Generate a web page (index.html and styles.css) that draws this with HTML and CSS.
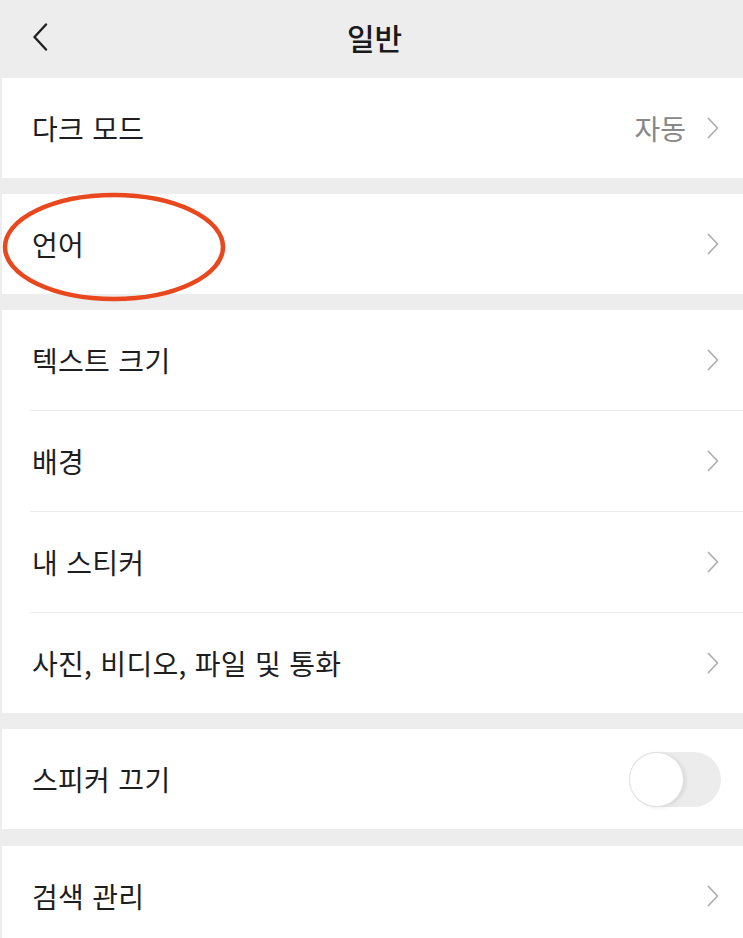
FILE: index.html
```html
<!DOCTYPE html>
<html lang="ko">
<head>
<meta charset="utf-8">
<title>일반</title>
<link rel="stylesheet" href="styles.css">
</head>
<body>
<div class="page">
  <header class="topbar">
    <span class="back">
      <svg width="16" height="28" viewBox="0 0 16 28"><path d="M14 1.5 L2.5 14 L14 26.5" fill="none" stroke="#222" stroke-width="2.4" stroke-linecap="round" stroke-linejoin="round"/></svg>
    </span>
    <h1 class="title">일반</h1>
  </header>

  <section class="group">
    <div class="row">
      <span class="label">다크 모드</span>
      <span class="right"><span class="value">자동</span><svg class="chev" width="12" height="22" viewBox="0 0 12 22"><path d="M1.5 1.5 L10.5 11 L1.5 20.5" fill="none" stroke="#b0b0b0" stroke-width="1.8" stroke-linecap="round" stroke-linejoin="round"/></svg></span>
    </div>
  </section>

  <section class="group">
    <div class="row">
      <span class="label">언어</span>
      <span class="right"><svg class="chev" width="12" height="22" viewBox="0 0 12 22"><path d="M1.5 1.5 L10.5 11 L1.5 20.5" fill="none" stroke="#b0b0b0" stroke-width="1.8" stroke-linecap="round" stroke-linejoin="round"/></svg></span>
    </div>
    <svg class="circle" width="226" height="112" viewBox="0 0 226 112"><ellipse cx="112" cy="55" rx="109" ry="52" fill="none" stroke="#e9471e" stroke-width="4.5"/></svg>
  </section>

  <section class="group">
    <div class="row divided">
      <span class="label">텍스트 크기</span>
      <span class="right"><svg class="chev" width="12" height="22" viewBox="0 0 12 22"><path d="M1.5 1.5 L10.5 11 L1.5 20.5" fill="none" stroke="#b0b0b0" stroke-width="1.8" stroke-linecap="round" stroke-linejoin="round"/></svg></span>
    </div>
    <div class="row divided">
      <span class="label">배경</span>
      <span class="right"><svg class="chev" width="12" height="22" viewBox="0 0 12 22"><path d="M1.5 1.5 L10.5 11 L1.5 20.5" fill="none" stroke="#b0b0b0" stroke-width="1.8" stroke-linecap="round" stroke-linejoin="round"/></svg></span>
    </div>
    <div class="row divided">
      <span class="label">내 스티커</span>
      <span class="right"><svg class="chev" width="12" height="22" viewBox="0 0 12 22"><path d="M1.5 1.5 L10.5 11 L1.5 20.5" fill="none" stroke="#b0b0b0" stroke-width="1.8" stroke-linecap="round" stroke-linejoin="round"/></svg></span>
    </div>
    <div class="row">
      <span class="label">사진, 비디오, 파일 및 통화</span>
      <span class="right"><svg class="chev" width="12" height="22" viewBox="0 0 12 22"><path d="M1.5 1.5 L10.5 11 L1.5 20.5" fill="none" stroke="#b0b0b0" stroke-width="1.8" stroke-linecap="round" stroke-linejoin="round"/></svg></span>
    </div>
  </section>

  <section class="group">
    <div class="row">
      <span class="label">스피커 끄기</span>
      <span class="toggle"><span class="knob"></span></span>
    </div>
  </section>

  <section class="group last">
    <div class="row">
      <span class="label">검색 관리</span>
      <span class="right"><svg class="chev" width="12" height="22" viewBox="0 0 12 22"><path d="M1.5 1.5 L10.5 11 L1.5 20.5" fill="none" stroke="#b0b0b0" stroke-width="1.8" stroke-linecap="round" stroke-linejoin="round"/></svg></span>
    </div>
  </section>
</div>
</body>
</html>
```

FILE: styles.css
```css
html, body {
  margin: 0;
  padding: 0;
  background: #ededed;
  height: 100%;
  overflow: hidden;
}

body {
  font-family: "Noto Sans CJK KR", "Noto Sans", sans-serif;
  color: #1e1e1e;
}

.page {
  margin-left: 2px;
  display: flex;
  flex-direction: column;
}

.topbar {
  height: 78px;
  box-sizing: border-box;
  padding-bottom: 5px;
  background: #ededed;
  display: flex;
  align-items: center;
  justify-content: center;
  position: relative;
}

.back {
  position: absolute;
  left: 30px;
  top: 23px;
  display: flex;
}

.title {
  margin: 0;
  font-size: 30px;
  font-weight: 500;
  color: #1a1a1a;
  line-height: 1;
  margin-left: 4px;
}

.group {
  background: #ffffff;
  margin-bottom: 16px;
  display: flex;
  flex-direction: column;
  position: relative;
}

.group.last {
  margin-top: 1px;
}

.row {
  height: 100px;
  display: flex;
  align-items: center;
  justify-content: space-between;
  padding: 0 24px 0 30px;
  box-sizing: border-box;
}

.row.divided {
  height: 101px;
  border-bottom: 1px solid #ececec;
  margin-left: 28px;
  padding-left: 2px;
}

.label {
  font-size: 28px;
  line-height: 1;
  letter-spacing: 0.3px;
}

.right {
  display: flex;
  align-items: center;
  gap: 21px;
}

.value {
  font-size: 28px;
  line-height: 1;
  color: #888888;
}

.chev {
  display: block;
}

.circle {
  position: absolute;
  left: 0;
  top: -2px;
}

.toggle {
  width: 92px;
  height: 55px;
  border-radius: 28px;
  background: #ececec;
  display: flex;
  align-items: center;
  margin-right: -2px;
}

.knob {
  width: 53px;
  height: 53px;
  border-radius: 50%;
  background: #ffffff;
  box-shadow: 0 0 0 1px #e2e2e2, 2px 1px 4px rgba(0, 0, 0, 0.12);
  margin-left: 1px;
}
```
